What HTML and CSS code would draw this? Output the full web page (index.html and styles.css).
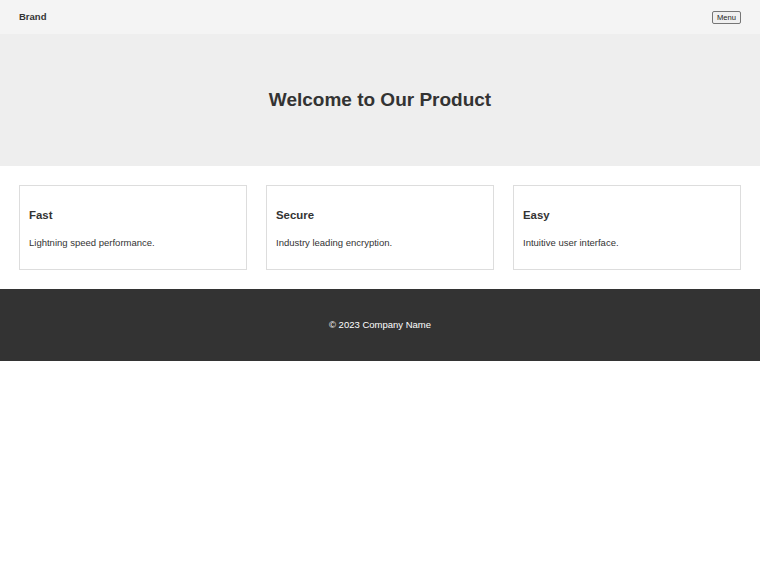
FILE: index.html
```html
<!DOCTYPE html>
<html lang="en">
<head>
    <meta charset="UTF-8">
    <meta name="viewport" content="width=device-width, initial-scale=1.0">
    <title>Our Product</title>
    <link rel="stylesheet" href="styles.css">
</head>
<body>
    <header class="topbar">
        <div class="brand">Brand</div>
        <button class="menu-btn" type="button">Menu</button>
    </header>

    <section class="hero">
        <h1>Welcome to Our Product</h1>
    </section>

    <main class="features">
        <div class="card">
            <h3>Fast</h3>
            <p>Lightning speed performance.</p>
        </div>
        <div class="card">
            <h3>Secure</h3>
            <p>Industry leading encryption.</p>
        </div>
        <div class="card">
            <h3>Easy</h3>
            <p>Intuitive user interface.</p>
        </div>
    </main>

    <footer class="footer">
        &copy; 2023 Company Name
    </footer>
</body>
</html>
```

FILE: styles.css
```css
body {
    font-family: "Liberation Sans", Arial, sans-serif;
    font-size: 9.5px;
    color: #333;
    background-color: #fff;
    margin: 0;
    padding: 0;
}
.topbar {
    display: flex;
    align-items: center;
    justify-content: space-between;
    height: 34px;
    padding: 0 19px;
    background-color: #f4f4f4;
}
.brand {
    font-weight: bold;
    font-size: 9.5px;
    line-height: 11px;
    margin-bottom: 1px;
}
.menu-btn {
    font-family: "Liberation Sans", Arial, sans-serif;
    font-size: 7.6px;
    color: #222;
    background-color: #f0f0f0;
    border: 1px solid #767676;
    border-radius: 2px;
    padding: 1px 4px;
    line-height: 9px;
}
.hero {
    background-color: #eee;
    padding: 55px 19px;
    text-align: center;
}
.hero h1 {
    margin: 0;
    font-size: 19px;
    line-height: 22px;
    color: #333;
}
.features {
    display: grid;
    grid-template-columns: repeat(3, 1fr);
    gap: 19px;
    padding: 19px;
}
.card {
    border: 1px solid #ddd;
    padding: 22px 9px 21px;
}
.card h3 {
    margin: 0 0 15px;
    font-size: 11.4px;
    line-height: 14px;
}
.card p {
    margin: 0;
    line-height: 11px;
}
.footer {
    background-color: #333;
    color: #fff;
    text-align: center;
    padding: 30px 19px;
    line-height: 12px;
}
```
